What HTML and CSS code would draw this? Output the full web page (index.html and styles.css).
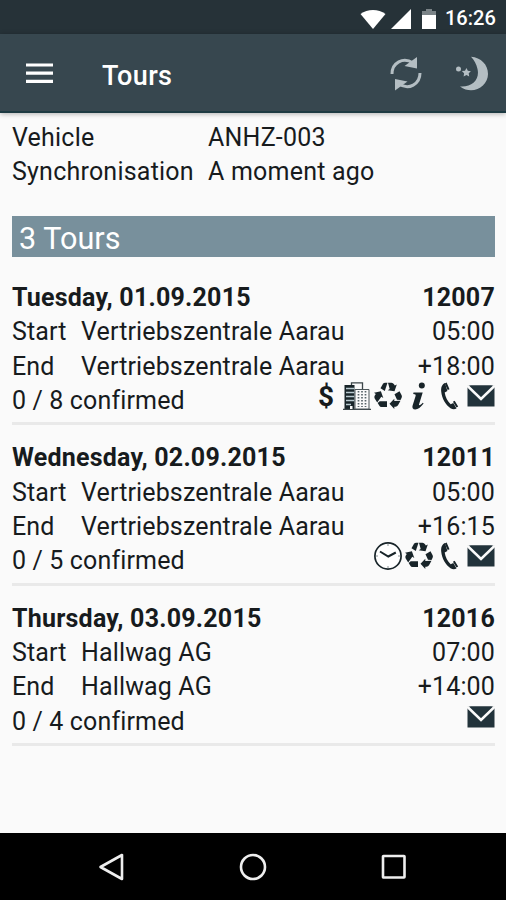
FILE: index.html
```
<!DOCTYPE html>
<html lang="en">
<head>
    <meta charset="utf-8">
    <title>Tours</title>
    <link rel="stylesheet" href="styles.css">
</head>

<body>
    <!-- shared icons -->
    <svg class="sprite" width="0" height="0">
        <symbol id="mail" viewBox="0 0 28 28">
            <path d="M0.5 3.5h27v21h-27z" fill="#22333b"/>
            <path d="M0 3.500L14 17 28 3.500" fill="none" stroke="#fafafa" stroke-width="2.600"/>
            <path d="M3 3.500h22L14 14z" fill="#22333b"/>
        </symbol>
        <symbol id="phone" viewBox="0 0 28 28">
            <path d="M9 1C6 2.200 4.800 5.500 5.200 9.500c.6 7 4.500 13.500 9.300 16.700 2 1.300 4.200 1.300 6 .3l-3.200-5.500-2.600 1.200C11.500 19.500 9.300 15 8.700 10.600l2.700-1.600z" fill="#182429"/>
            <path d="M9.700 1l2.900 6.700M17.800 19.300l3.500 5.700" stroke="#182429" stroke-width="2"/>
        </symbol>
        <symbol id="info" viewBox="0 0 28 28">
            <circle cx="16.800" cy="3.400" r="3" fill="#182429"/>
            <path d="M8.500 10.500h9.200l-3.700 12c-.3 1.300.7 1.200 3.800-1.700l.8.800c-3 4-5.600 5.900-8.300 5.900-2.500 0-3.400-1.700-2.700-4l3-9.600c.4-1.300-.3-1.800-2.400-1.900z" fill="#182429"/>
        </symbol>
        <symbol id="recycle" viewBox="0 0 28 28" fill="#182429">
            <path d="M6.500 6.300L9 1.800Q9.700.8 11.300.8h2.200L10.800 9z"/>
            <path d="M14 .8h3.500q1.600 0 2.500 1.500l.8 1.300 2-1-2.300 6.600-6.800-.9 2-1.400z"/>
            <path d="M20.500 12.300l5-3 2 3.800q.8 1.500 0 3l-1 1.800-3.500-.2z"/>
            <path d="M26.500 18.800l-2.500 4.500q-.8 1.400-2.400 1.400h-1.300V27l-4.800-5.200 4.800-5v2.300z"/>
            <path d="M13 19.300v5.800H7.500q-1.500 0-2.300-1.500l-1.500-2.500 2-1.800z"/>
            <path d="M3.200 20.500L.7 16.500Q0 15 .8 13.500l1-1.600-1.900-1.100 7-1.500 2.400 6.600-2-1.100z"/>
        </symbol>
        <symbol id="building" viewBox="0 0 28 28">
            <path d="M1.500 3h10v24h-10z" fill="#182429"/>
            <path d="M3 6.500h8.500M3 10.500h8.500M3 14.500h8.500M3 18.500h8.500M3 22.500h5" stroke="#b8c9d0" stroke-width="1.500"/>
            <path d="M8.500 3V.8h11V7M0 27.300h28" fill="none" stroke="#3b4548" stroke-width="1.300"/>
            <path d="M12 7.500h14V27H12z" fill="#fafafa" stroke="#4b5558"/>
            <path d="M15.500 9v16M19 9v16M22.500 9v16" stroke="#59656a" stroke-width="1.700" stroke-dasharray="1.500 1.500"/>
            <path d="M7 24h2.500v3H7z" fill="#fafafa"/>
        </symbol>
        <symbol id="clock" viewBox="0 0 28 28">
            <circle cx="14" cy="14" r="13.100" fill="#fff" stroke="#182429" stroke-width="1.700"/>
            <path d="M6 9.500l8.300 5 7.500-4" fill="none" stroke="#182429" stroke-width="2"/>
            <path d="M14 2v2M14 24v2M2 14h2M24 14h2" stroke="#8b9497"/>
        </symbol>
    </svg>

    <div class="status">
        <svg width="78" height="22" viewBox="0 0 78 22">
            <path d="M0.500 5C7.500-.5 18.500-.5 25.500 5L13 20z" fill="#fff"/>
            <path d="M31 20L51 0v20z" fill="#fff"/>
            <path d="M66 0h6v2h4v5H62V2h4z" fill="#7a8387"/>
            <path d="M62 6h14v14H62z" fill="#fff"/>
        </svg>
        <span class="clock">16:26</span>
    </div>

    <div class="toolbar">
        <svg class="menu" width="27" height="21" viewBox="0 0 27 21">
            <path d="M0 2h27M0 10.200h27M0 18.400h27" stroke="#fff" stroke-width="3.200"/>
        </svg>
        <h1>Tours</h1>
        <svg class="sync" width="34" height="36" viewBox="0 0 34 36" fill="none" stroke="#b4bec3" stroke-width="3">
            <path d="M3 18C3 7 14 .5 24 7"/>
            <path d="M31 17c0 11-11 17.500-21 11"/>
            <path d="M28 1v11.500L15.500 10zM6 34.500V23l12.500 2.500z" fill="#b4bec3" stroke="none"/>
        </svg>
        <svg class="moon" width="34" height="36" viewBox="0 0 34 36" fill="#b4bec3">
            <path d="M15 .7C25 1.500 32 8.500 32 18c0 12-15 22-28 12.500 12 1 20-7 17.500-17.500C20.500 8 18 4 15 .7z"/>
            <path d="M10.500 12l1.300 2.700 3.100.5-2.200 2.100.5 3.200-2.700-1.400-2.900 1.300.5-3.100-2.300-2.200 3.200-.4z"/>
            <circle cx="2.500" cy="13" r="2.500"/>
        </svg>
    </div>

    <div class="content">
        <div class="details">
            <span>Vehicle</span><span>ANHZ-003</span>
            <span>Synchronisation</span><span>A moment ago</span>
        </div>

        <h2>3 Tours</h2>

        <div class="tour">
            <div class="row title"><span>Tuesday, 01.09.2015</span><span>12007</span></div>
            <div class="row"><span class="label">Start</span><span class="place">Vertriebszentrale Aarau</span><span>05:00</span></div>
            <div class="row"><span class="label">End</span><span class="place">Vertriebszentrale Aarau</span><span>+18:00</span></div>
            <div class="row">
                <span>0 / 8 confirmed</span>
                <div class="icons">
                    <span class="dollar">$</span>
                    <svg><use href="#building"/></svg>
                    <svg><use href="#recycle"/></svg>
                    <svg><use href="#info"/></svg>
                    <svg><use href="#phone"/></svg>
                    <svg><use href="#mail"/></svg>
                </div>
            </div>
        </div>

        <div class="tour">
            <div class="row title"><span>Wednesday, 02.09.2015</span><span>12011</span></div>
            <div class="row"><span class="label">Start</span><span class="place">Vertriebszentrale Aarau</span><span>05:00</span></div>
            <div class="row"><span class="label">End</span><span class="place">Vertriebszentrale Aarau</span><span>+16:15</span></div>
            <div class="row">
                <span>0 / 5 confirmed</span>
                <div class="icons">
                    <svg><use href="#clock"/></svg>
                    <svg><use href="#recycle"/></svg>
                    <svg><use href="#phone"/></svg>
                    <svg><use href="#mail"/></svg>
                </div>
            </div>
        </div>

        <div class="tour">
            <div class="row title"><span>Thursday, 03.09.2015</span><span>12016</span></div>
            <div class="row"><span class="label">Start</span><span class="place">Hallwag AG</span><span>07:00</span></div>
            <div class="row"><span class="label">End</span><span class="place">Hallwag AG</span><span>+14:00</span></div>
            <div class="row">
                <span>0 / 4 confirmed</span>
                <div class="icons">
                    <svg><use href="#mail"/></svg>
                </div>
            </div>
        </div>
    </div>

    <div class="navbar">
        <svg width="28" height="28" viewBox="0 0 28 28"><path d="M2.500 14L24 2v24z"/></svg>
        <svg width="28" height="28" viewBox="0 0 28 28"><circle cx="14" cy="14" r="12"/></svg>
        <svg width="28" height="28" viewBox="0 0 28 28"><rect x="3" y="3" width="21.500" height="21.500" rx="0.500"/></svg>
    </div>
</body>
</html>
```
FILE: styles.css
```
* {
    box-sizing: border-box;
}

body {
    margin: 0;
    height: 900px;
    display: flex;
    flex-direction: column;
    overflow: hidden;
    background: #fafafa;
    color: #171b1d;
    font-family: Roboto, sans-serif;
    font-size: 25px;
}

.sprite {
    display: none;
}

.status {
    height: 34px;
    padding: 2px 11px 0 0;
    display: flex;
    justify-content: flex-end;
    align-items: center;
    background: #263238;
    color: #fff;
}

.status svg {
    margin: 4px 7px 0 0;
}

.clock {
    width: 50px;
    font-size: 20px;
    font-weight: 500;
    white-space: nowrap;
}

.toolbar {
    height: 79px;
    padding: 3px 16px 0 26px;
    display: flex;
    align-items: center;
    background: #37474f;
    border-bottom: 2px solid #1d3a42;
    box-shadow: 0 1px 5px rgba(0, 0, 0, 0.3);
    color: #fff;
}

.menu {
    margin-top: -1px;
}

h1 {
    flex: 1;
    margin: 3px 0 0 49px;
    font-size: 27px;
    font-weight: 500;
    letter-spacing: 0.4px;
}

.moon {
    margin-left: 33px;
}

.content {
    flex: 1;
    padding: 8px 11px 0 12px;
}

.details {
    display: grid;
    grid-template-columns: 196px 1fr;
    line-height: 34.400px;
    letter-spacing: 0.220px;
}

h2 {
    height: 41px;
    margin: 26px 0 24px;
    padding: 3px 7px 0;
    background: #78909c;
    color: #fff;
    font-size: 30.600px;
    font-weight: 400;
    line-height: 40px;
}

.tour {
    height: 144.400px;
    margin-bottom: 16px;
    border-bottom: 3px solid #e9e9e9;
}

.row {
    display: flex;
    justify-content: space-between;
    height: 34.400px;
    line-height: 34.400px;
    letter-spacing: 0.140px;
}

.title {
    font-weight: 700;
    letter-spacing: 0.220px;
}

.label {
    width: 69px;
}

.place {
    flex: 1;
}

.icons {
    display: flex;
    gap: 3px;
    margin-top: -2px;
}

.icons svg {
    width: 28px;
    height: 28px;
}

.dollar {
    width: 28px;
    text-align: center;
    font-size: 28px;
    font-weight: 700;
    line-height: 29px;
}

.navbar {
    height: 67px;
    display: flex;
    justify-content: center;
    align-items: center;
    gap: 113px;
    background: #000;
}

.navbar svg {
    fill: none;
    stroke: #eee;
    stroke-width: 2.600;
    stroke-linejoin: round;
}
```
